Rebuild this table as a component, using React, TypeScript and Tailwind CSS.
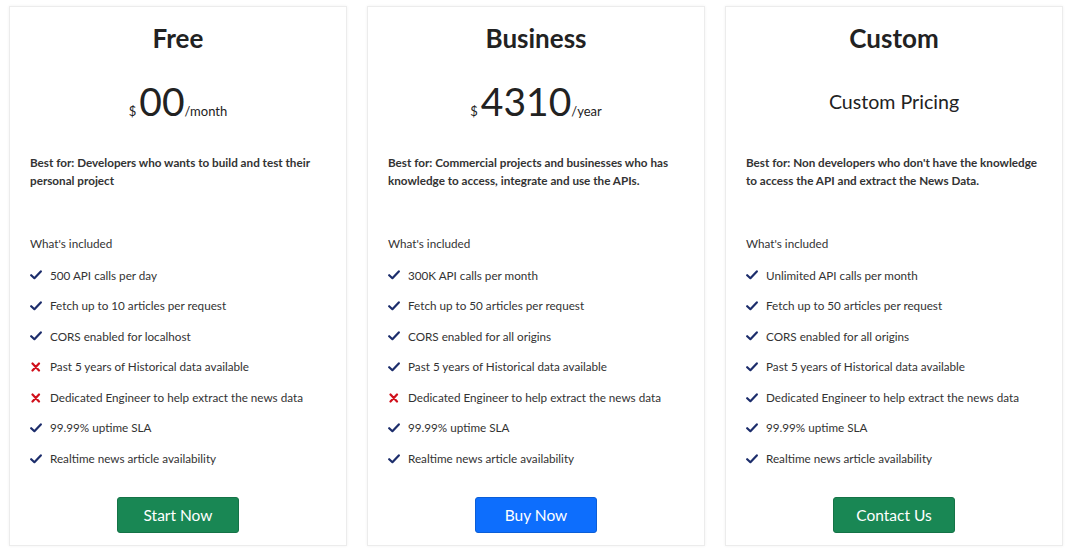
import React from 'react';

type Feature = { text: string; ok: boolean };

type Plan = {
  name: string;
  price?: string;
  period?: string;
  custom?: string;
  bestFor: string;
  features: Feature[];
  cta: string;
  button: string;
};

const plans: Plan[] = [
  {
    name: 'Free',
    price: '00',
    period: '/month',
    bestFor: 'Developers who wants to build and test their personal project',
    features: [
      { text: '500 API calls per day', ok: true },
      { text: 'Fetch up to 10 articles per request', ok: true },
      { text: 'CORS enabled for localhost', ok: true },
      { text: 'Past 5 years of Historical data available', ok: false },
      { text: 'Dedicated Engineer to help extract the news data', ok: false },
      { text: '99.99% uptime SLA', ok: true },
      { text: 'Realtime news article availability', ok: true },
    ],
    cta: 'Start Now',
    button: 'bg-[#198754] border-[#157347]',
  },
  {
    name: 'Business',
    price: '4310',
    period: '/year',
    bestFor: 'Commercial projects and businesses who has knowledge to access, integrate and use the APIs.',
    features: [
      { text: '300K API calls per month', ok: true },
      { text: 'Fetch up to 50 articles per request', ok: true },
      { text: 'CORS enabled for all origins', ok: true },
      { text: 'Past 5 years of Historical data available', ok: true },
      { text: 'Dedicated Engineer to help extract the news data', ok: false },
      { text: '99.99% uptime SLA', ok: true },
      { text: 'Realtime news article availability', ok: true },
    ],
    cta: 'Buy Now',
    button: 'bg-[#0d6efd] border-[#0b5ed7]',
  },
  {
    name: 'Custom',
    custom: 'Custom Pricing',
    bestFor: "Non developers who don't have the knowledge to access the API and extract the News Data.",
    features: [
      { text: 'Unlimited API calls per month', ok: true },
      { text: 'Fetch up to 50 articles per request', ok: true },
      { text: 'CORS enabled for all origins', ok: true },
      { text: 'Past 5 years of Historical data available', ok: true },
      { text: 'Dedicated Engineer to help extract the news data', ok: true },
      { text: '99.99% uptime SLA', ok: true },
      { text: 'Realtime news article availability', ok: true },
    ],
    cta: 'Contact Us',
    button: 'bg-[#198754] border-[#157347]',
  },
];

function Check() {
  return (
    <svg width="12" height="10" viewBox="0 0 12 10" className="shrink-0">
      <path d="M1.2 5.2 L4.4 8.2 L10.8 1.4" fill="none" stroke="#1c2d6b" strokeWidth="2.2" strokeLinecap="round" strokeLinejoin="round" />
    </svg>
  );
}

function Cross() {
  return (
    <svg width="12" height="10" viewBox="0 0 12 10" className="shrink-0">
      <path d="M2.5 1.5 L9 8.5 M9 1.5 L2.5 8.5" fill="none" stroke="#d0101b" strokeWidth="2.2" strokeLinecap="round" />
    </svg>
  );
}

function PlanCard({ plan }: { plan: Plan }) {
  return (
    <div className="w-[338px] h-[540px] shrink-0 border border-[#ececec] bg-white px-5 flex flex-col shadow-[0_0_3px_rgba(0,0,0,0.06)]">
      <h2 className="mt-[15px] text-center text-[26px] leading-[32px] font-bold text-[#222]">{plan.name}</h2>
      <div className="mt-[13px] h-[70px] flex items-center justify-center text-[#222]">
        {plan.custom ? (
          <span className="text-[19.6px]">{plan.custom}</span>
        ) : (
          <span className="flex items-baseline">
            <span className="text-[13px] mr-[3px]">$</span>
            <span className="text-[39px] leading-none">{plan.price}</span>
            <span className="text-[13px]">{plan.period}</span>
          </span>
        )}
      </div>
      <p className="mt-[16px] h-[60px] text-[11.7px] leading-[18px] font-bold text-[#333]">
        {`Best for: ${plan.bestFor}`}
      </p>
      <p className="mt-[21px] text-[11.7px] leading-[18px] text-[#333]">What's included</p>
      <ul className="mt-[8px] flex flex-col">
        {plan.features.map((f) => (
          <li key={f.text} className="h-[30.6px] flex items-center gap-[8px] text-[11.7px] text-[#333]">
            {f.ok ? <Check /> : <Cross />}
            <span>{f.text}</span>
          </li>
        ))}
      </ul>
      <div className="mt-[23px] flex justify-center">
        <button className={`w-[122px] h-[36px] rounded-[3px] border text-white text-[15.5px] ${plan.button}`}>
          {plan.cta}
        </button>
      </div>
    </div>
  );
}

export default function App() {
  return (
    <div className="w-[1070px] h-[554px] bg-white flex gap-5 pl-[9px] pt-[6px] font-['Lato','Liberation_Sans',sans-serif]">
      {plans.map((p) => (
        <PlanCard key={p.name} plan={p} />
      ))}
    </div>
  );
}
